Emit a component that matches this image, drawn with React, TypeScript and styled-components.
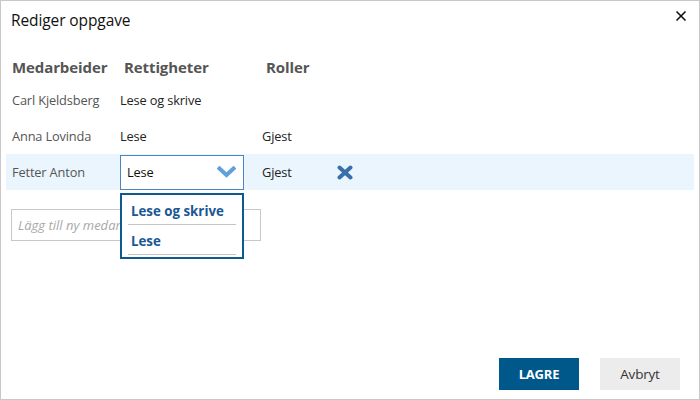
import React from "react";
import styled, { createGlobalStyle } from "styled-components";

const Global = createGlobalStyle`
  html, body { margin: 0; padding: 0; background: #fff; }
  body { font-family: "Open Sans", "Noto Sans", sans-serif; }
  * { box-sizing: border-box; }
`;

const Dialog = styled.div`
  width: 700px;
  height: 400px;
  border: 1px solid #c8c8c8;
  display: flex;
  flex-direction: column;
  position: relative;
  background: #fff;
`;

const Header = styled.div`
  display: flex;
  align-items: center;
  justify-content: space-between;
  padding: 4px 12px 0 10px;
  height: 34px;
`;

const Title = styled.h1`
  margin: 0;
  font-size: 15.5px;
  font-weight: 400;
  color: #111;
  letter-spacing: -0.1px;
`;

const Close = styled.button`
  border: none;
  background: none;
  padding: 0;
  width: 12px;
  height: 12px;
  display: flex;
  margin-top: -8px;
  cursor: pointer;
`;

const Table = styled.div`
  margin-top: 14px;
  padding: 0 5px;
  display: flex;
  flex-direction: column;
`;

const Row = styled.div<{ $active?: boolean; $head?: boolean }>`
  display: grid;
  grid-template-columns: 108px 142px 74px 1fr;
  align-items: center;
  height: ${(p) => (p.$head ? "33px" : "36px")};
  padding-left: 6px;
  background: ${(p) => (p.$active ? "#eaf5fe" : "transparent")};
`;

const HeadCell = styled.div<{ $indent?: boolean }>`
  font-size: 15px;
  font-weight: 700;
  color: #555;
  padding-left: ${(p) => (p.$indent ? "4px" : "0")};
  letter-spacing: -0.1px;
  margin-top: 2px;
`;

const Cell = styled.div`
  font-size: 12.8px;
  color: #555;
  letter-spacing: -0.15px;
  position: relative;
`;

const ValueCell = styled(Cell)`
  color: #222;
`;

const Select = styled.div`
  width: 124px;
  height: 35px;
  border: 1px solid #4a86c0;
  background: #fff;
  display: flex;
  align-items: center;
  justify-content: space-between;
  padding: 0 7px 0 6px;
  font-size: 12.8px;
  color: #111;
  letter-spacing: -0.15px;
`;

const Menu = styled.ul`
  position: absolute;
  left: 0;
  top: 38px;
  width: 124px;
  margin: 0;
  padding: 0 6px 2px 6px;
  list-style: none;
  background: #fff;
  border: 2px solid #0c5a8e;
  z-index: 2;
`;

const MenuItem = styled.li`
  font-size: 13.3px;
  font-weight: 700;
  color: #1a5894;
  padding: 4px 0 0 3px;
  height: 30px;
  display: flex;
  align-items: center;
  border-bottom: 1px solid #c4c4c4;
  letter-spacing: 0;
`;

const RemoveButton = styled.button`
  border: none;
  background: none;
  padding: 0;
  margin-left: 1px;
  display: flex;
  cursor: pointer;
`;

const AddInput = styled.input`
  margin: 19px 0 0 10px;
  width: 250px;
  height: 32px;
  border: 1px solid #c8c8c8;
  padding: 0 6px;
  font-family: inherit;
  font-size: 13px;
  &::placeholder {
    color: #a8a8a8;
    font-style: italic;
  }
`;

const Footer = styled.div`
  margin-top: auto;
  display: flex;
  justify-content: flex-end;
  gap: 21px;
  padding: 0 19px 9px 0;
`;

const Button = styled.button<{ $primary?: boolean }>`
  width: 80px;
  height: 32px;
  border: none;
  font-family: inherit;
  font-size: ${(p) => (p.$primary ? "13px" : "13.5px")};
  font-weight: ${(p) => (p.$primary ? 700 : 400)};
  color: ${(p) => (p.$primary ? "#fff" : "#333")};
  background: ${(p) => (p.$primary ? "#00578a" : "#ececec")};
  letter-spacing: -0.2px;
`;

const Chevron = () => (
  <svg width="19" height="12" viewBox="0 0 19 12">
    <polyline points="2.5,2.5 9.5,9 16.5,2.5" fill="none" stroke="#62a0dc" strokeWidth="4" strokeLinejoin="miter" strokeLinecap="square" />
  </svg>
);

const Cross = () => (
  <svg width="16" height="15" viewBox="0 0 16 15">
    <g stroke="#3a70a8" strokeWidth="4" strokeLinecap="round">
      <line x1="2.5" y1="2.5" x2="13.5" y2="12.5" />
      <line x1="13.5" y1="2.5" x2="2.5" y2="12.5" />
    </g>
  </svg>
);

const CloseIcon = () => (
  <svg width="12" height="12" viewBox="0 0 12 12">
    <g stroke="#111" strokeWidth="1.6">
      <line x1="1.5" y1="1.5" x2="10.5" y2="10.5" />
      <line x1="10.5" y1="1.5" x2="1.5" y2="10.5" />
    </g>
  </svg>
);

export default function App() {
  return (
    <>
      <Global />
      <Dialog>
        <Header>
          <Title>Rediger oppgave</Title>
          <Close aria-label="Lukk"><CloseIcon /></Close>
        </Header>
        <Table>
          <Row $head>
            <HeadCell>Medarbeider</HeadCell>
            <HeadCell $indent>Rettigheter</HeadCell>
            <HeadCell $indent>Roller</HeadCell>
            <div />
          </Row>
          <Row>
            <Cell>Carl Kjeldsberg</Cell>
            <ValueCell>Lese og skrive</ValueCell>
            <ValueCell />
            <div />
          </Row>
          <Row>
            <Cell>Anna Lovinda</Cell>
            <ValueCell>Lese</ValueCell>
            <ValueCell>Gjest</ValueCell>
            <div />
          </Row>
          <Row $active>
            <Cell>Fetter Anton</Cell>
            <ValueCell>
              <Select>
                <span>Lese</span>
                <Chevron />
              </Select>
              <Menu>
                <MenuItem>Lese og skrive</MenuItem>
                <MenuItem>Lese</MenuItem>
              </Menu>
            </ValueCell>
            <ValueCell>Gjest</ValueCell>
            <div>
              <RemoveButton aria-label="Fjern"><Cross /></RemoveButton>
            </div>
          </Row>
        </Table>
        <AddInput placeholder="Lägg till ny medarbetare..." />
        <Footer>
          <Button $primary>LAGRE</Button>
          <Button>Avbryt</Button>
        </Footer>
      </Dialog>
    </>
  );
}
